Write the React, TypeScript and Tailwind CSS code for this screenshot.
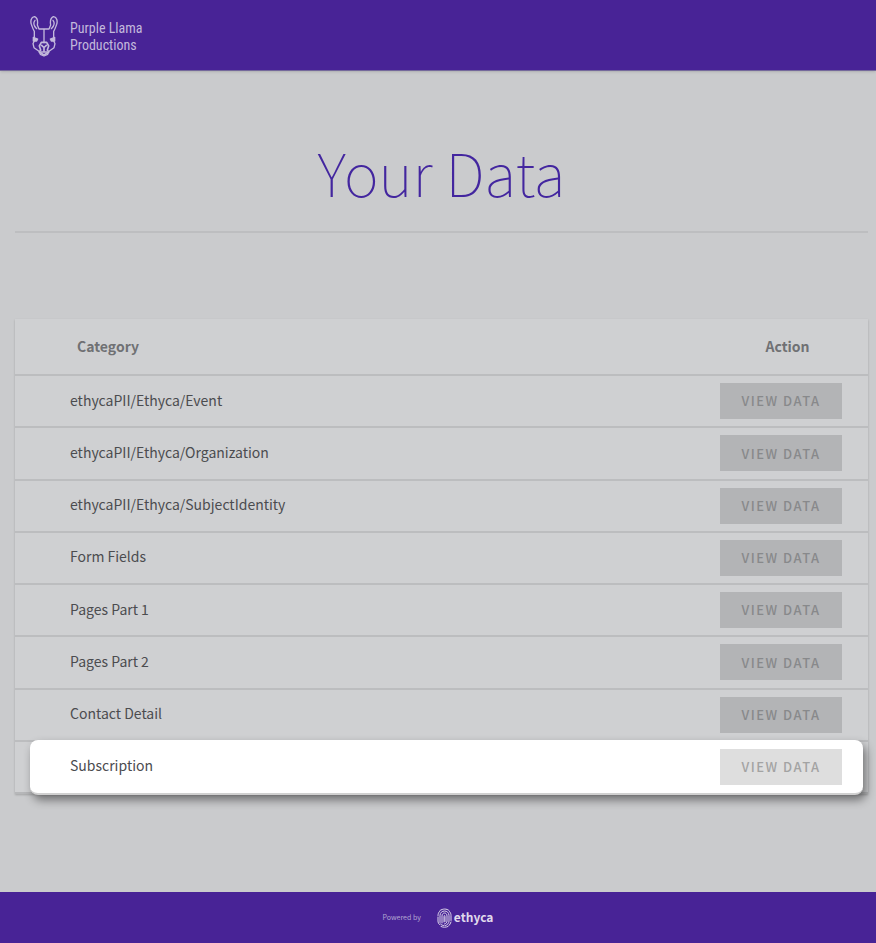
import { clsx } from 'clsx';

const categories = [
  'ethycaPII/Ethyca/Event',
  'ethycaPII/Ethyca/Organization',
  'ethycaPII/Ethyca/SubjectIdentity',
  'Form Fields',
  'Pages Part 1',
  'Pages Part 2',
  'Contact Detail',
  'Subscription',
];

const activeCategory = 'Subscription';

function LlamaLogo() {
  return (
    <svg
      width="28"
      height="41"
      viewBox="30 18 84 123"
      fill="none"
      stroke="#c3b9dc"
      strokeWidth="4"
      strokeLinecap="round"
      strokeLinejoin="round"
      aria-hidden="true"
    >
      {/* Ears */}
      <path d="M43 20C33 21 31 34 34 43C37 51 38 56 43 64V82M44 20C52 24 54 34 52 45L57 57H87L92 45C90 34 92 24 100 20" />
      <path d="M101 20C111 21 113 34 110 43C107 51 106 56 101 64V82" />
      <path d="M45 31C39 38 42 48 50 56M99 31C105 38 102 48 94 56" strokeWidth="4" />
      {/* Eyes */}
      <path d="M40 82L53 87L50 93H40ZM104 82L91 87L94 93H104Z" fill="#c3b9dc" />
      {/* Face */}
      <path d="M43 92L39 101L42 113L57 124L61 133L72 138L83 133L87 124L102 113L105 101L101 92" />
      <path d="M72 58V98" strokeWidth="4" />
      {/* Muzzle */}
      <path d="M64 97H80L86 108L82 120L86 126L72 135L58 126L62 120L58 108Z" strokeWidth="5" />
      <path d="M65 106L70 111M79 106L74 111M72 112V122M64 126H80" strokeWidth="5" />
    </svg>
  );
}

function FingerprintLogo() {
  return (
    <svg
      width="15"
      height="20"
      viewBox="0 0 30 40"
      fill="none"
      stroke="#e0daec"
      strokeWidth="2"
      strokeLinecap="round"
      aria-hidden="true"
    >
      <path d="M6 5C12 1 19 1 24 5M2 15C2 12 3 9 5 7M25 7C27 9 28 12 28 15V25M2 18V26C2 29 3 31 5 33M28 28C27 31 26 33 24 35M8 37C12 39 18 39 22 37" />
      <path d="M6 29V15C6 3 24 3 24 15V26C24 30 21 34 17 35M7 32C9 34 11 35 14 35" />
      <path d="M10 30V16C10 8 20 8 20 16V26C20 29 18 31 15 32" />
      <path d="M14 28V17C14 14 16 14 16 17V27" />
    </svg>
  );
}

function CategoryRow({ name, active }: { name: string; active: boolean }) {
  return (
    <tr
      className={clsx(
        active ? 'relative isolate border-b-2 border-[#b6b7b9]' : 'border-b-2 border-[#bcbdbf]'
      )}
    >
      <td className="pt-0 pb-0.5 pl-[55px] text-[14px] text-[#4b4c4f]">
        {active && (
          <div className="absolute left-[15px] right-[5px] -top-px -bottom-1 -z-10 rounded-lg border-b-2 border-[#d0d0d0] bg-white shadow-[3px_5px_10px_rgba(0,0,0,0.45)]" />
        )}
        {name}
      </td>
      <td className="w-[148px] pr-[26px]">
        <button
          type="button"
          className={clsx(
            'block h-9 w-[122px] text-[13px] font-medium tracking-[1.5px]',
            active ? 'bg-[#dedede] text-[#a3a3a3]' : 'bg-[#b3b4b6] text-[#88898b]'
          )}
        >
          VIEW DATA
        </button>
      </td>
    </tr>
  );
}

export default function App() {
  return (
    <div className="flex min-h-screen flex-col bg-[#cacbcd] font-['Noto_Sans_CJK_SC',sans-serif]">
      {/* Header */}
      <header className="flex h-[71px] items-center gap-3 border-b border-[#75699b] bg-[#482396] pt-0.5 pl-[30px] shadow-sm">
        <LlamaLogo />
        <div className="pt-0.5 font-['Roboto_Condensed','Lato',sans-serif] text-[14px] leading-[17px] text-[#c3b9dc]">
          Purple Llama
          <br />
          Productions
        </div>
      </header>

      <main className="flex-1 pl-[15px] pr-2 pb-[97px]">
        <h1 className="border-b-2 border-[#bdbec0] pt-14 pb-[14px] text-center text-[59px] leading-[90px] font-thin text-[#43269f]">
          Your Data
        </h1>

        <table className="mt-[86px] h-[475px] w-full border-collapse bg-[#cfd0d2] shadow-[0_1px_2px_rgba(0,0,0,0.2)]">
          <thead>
            <tr className="h-[56px] border-b-2 border-[#bcbdbf] text-[14px] text-[#707174]">
              <th className="pl-[62px] text-left font-bold">Category</th>
              <th className="pr-[13px] text-center font-bold">Action</th>
            </tr>
          </thead>
          <tbody>
            {categories.map((name) => (
              <CategoryRow key={name} name={name} active={name === activeCategory} />
            ))}
          </tbody>
        </table>
      </main>

      {/* Footer */}
      <footer className="flex h-[51px] items-center justify-center gap-4 bg-[#482396]">
        <span className="text-[7px] text-[#b3a6d2]">Powered by</span>
        <div className="flex items-center gap-0.5 text-[12px] font-bold text-[#e0daec]">
          <FingerprintLogo />
          <span className="pb-0.5">ethyca</span>
        </div>
      </footer>
    </div>
  );
}
